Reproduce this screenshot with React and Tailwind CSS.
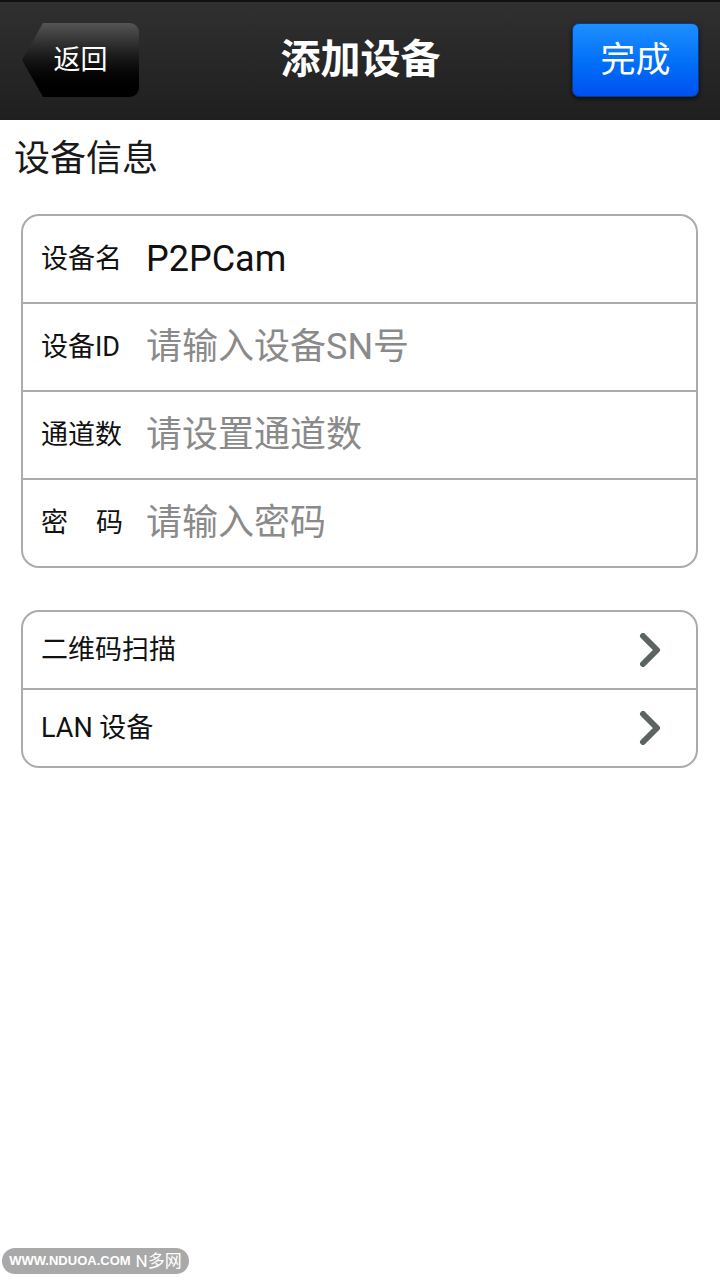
import React from "react";

const cjk = "font-['Roboto','Noto_Sans_CJK_SC',sans-serif]";

function Chevron() {
  return (
    <svg width="24" height="34" viewBox="0 0 24 34" className="mr-[34px]">
      <polyline points="5,3 19,17 5,31" fill="none" stroke="#5b6461" strokeWidth="6" strokeLinecap="round" strokeLinejoin="round" />
    </svg>
  );
}

function FieldRow({ label, value, placeholder, last, spaced }) {
  return (
    <div className={`flex items-center pl-[18px] ${last ? "h-[86px]" : "h-[88px] border-b-2 border-[#ababab]"}`}>
      <div className={`w-[82px] text-[27px] text-[#111] ${spaced ? "flex justify-between" : ""}`}>
        {spaced ? (
          <>
            <span>密</span>
            <span>码</span>
          </>
        ) : (
          label
        )}
      </div>
      <div className={`ml-[23px] text-[36px] ${value ? "text-[#111]" : "text-[#8a8a8a]"}`}>
        {value || placeholder}
      </div>
    </div>
  );
}

export default function App() {
  return (
    <div className={`relative w-[720px] min-h-[1280px] bg-white ${cjk}`}>
      {/* Header */}
      <div className="h-[120px] bg-gradient-to-b from-[#303030] to-[#1f1f1f] border-t-2 border-[#111] flex items-center justify-between px-[22px]">
        <div className="h-[74px] w-[117px] rounded-r-[9px] bg-gradient-to-b from-[#555] via-[#151515] to-[#000] [clip-path:polygon(21px_0,100%_0,100%_100%,21px_100%,0_50%)] flex items-center justify-center mt-[-2px]">
          <span className="text-white text-[27px] leading-none">返回</span>
        </div>
        <div className="text-white text-[40px] font-bold leading-none mt-[-2px] ml-[10px]">添加设备</div>
        <div className="h-[74px] w-[127px] rounded-[7px] bg-gradient-to-b from-[#1d8fff] to-[#0050f0] border border-[#0a3a90] shadow-[0_2px_4px_rgba(0,0,0,0.6)] flex items-center justify-center mt-[-2px] mr-[-1px]">
          <span className="text-white text-[35px] leading-none">完成</span>
        </div>
      </div>

      {/* Section title */}
      <div className="pl-[14px] pt-[18px] text-[36px] leading-[42px] text-[#1a1a1a]">设备信息</div>

      {/* Card 1 */}
      <div className="ml-[21px] mr-[22px] mt-[34px] border-2 border-[#ababab] rounded-[18px] overflow-hidden">
        <FieldRow label="设备名" value="P2PCam" />
        <FieldRow label="设备ID" placeholder="请输入设备SN号" />
        <FieldRow label="通道数" placeholder="请设置通道数" />
        <FieldRow spaced placeholder="请输入密码" last />
      </div>

      {/* Card 2 */}
      <div className="ml-[21px] mr-[22px] mt-[42px] border-2 border-[#ababab] rounded-[18px] overflow-hidden">
        <div className="flex items-center justify-between h-[78px] pl-[18px] border-b-2 border-[#ababab]">
          <span className="text-[27px] text-[#111]">二维码扫描</span>
          <Chevron />
        </div>
        <div className="flex items-center justify-between h-[76px] pl-[18px]">
          <span className="text-[27px] text-[#111]">LAN 设备</span>
          <Chevron />
        </div>
      </div>

      {/* Watermark */}
      <div className="absolute left-[2px] top-[1248px] h-[26px] w-[187px] rounded-full bg-[#a9a9a9] flex items-center justify-center gap-[5px]">
        <span className="text-white font-bold text-[13px] font-['Liberation_Sans',sans-serif]">WWW.NDUOA.COM</span>
        <span className="text-white text-[17px] leading-none">N多网</span>
      </div>
    </div>
  );
}
